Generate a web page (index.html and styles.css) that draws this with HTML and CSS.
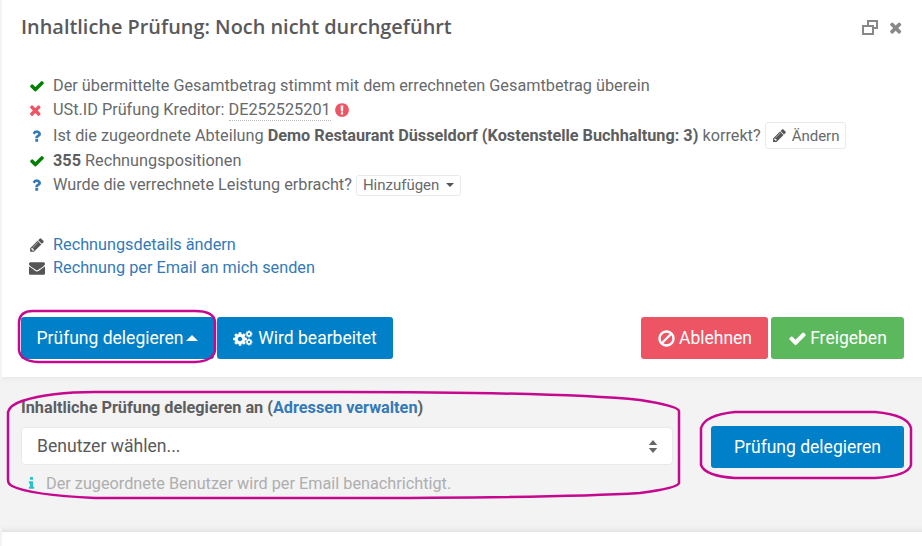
FILE: index.html
```html
<!DOCTYPE html>
<html lang="de">
<head>
<meta charset="utf-8">
<title>Inhaltliche Prüfung</title>
<link rel="stylesheet" href="styles.css">
</head>
<body>
<svg class="defs" width="0" height="0" aria-hidden="true">
  <symbol id="i-check" viewBox="0 0 1792 1792"><path d="M1671 566q0 40-28 68l-724 724-136 136q-28 28-68 28t-68-28l-136-136-362-362q-28-28-28-68t28-68l136-136q28-28 68-28t68 28l294 295 656-657q28-28 68-28t68 28l136 136q28 28 28 68z"/></symbol>
  <symbol id="i-times" viewBox="0 0 1792 1792"><path d="M1298 1322q0 40-28 68l-136 136q-28 28-68 28t-68-28l-294-294-294 294q-28 28-68 28t-68-28l-136-136q-28-28-28-68t28-68l294-294-294-294q-28-28-28-68t28-68l136-136q28-28 68-28t68 28l294 294 294-294q28-28 68-28t68 28l136 136q28 28 28 68t-28 68l-294 294 294 294q28 28 28 68z"/></symbol>
  <symbol id="i-question" viewBox="0 0 1792 1792"><path d="M1024 1376v240q0 16-12 28t-28 12h-240q-16 0-28-12t-12-28v-240q0-16 12-28t28-12h240q16 0 28 12t12 28zm316-600q0 54-15.500 101t-35 76.500-55 59.500-57.500 43.500-61 35.500q-41 23-68.500 65t-27.500 67q0 17-12 32.500t-28 15.500h-240q-15 0-25.500-18.500t-10.500-37.500v-45q0-83 65-156.500t143-108.500q59-27 84-56t25-76q0-42-46.500-74t-107.500-32q-65 0-108 29-35 25-107 115-13 16-31 16-12 0-25-8l-164-125q-13-10-15.500-25t5.500-28q160-266 464-266 80 0 161 31t146 83 106 127.500 41 158.500z"/></symbol>
  <symbol id="i-pencil" viewBox="0 0 1792 1792"><path d="M491 1536l91-91-235-235-91 91v107h128v128h107zm523-928q0-22-22-22-10 0-17 7l-542 542q-7 7-7 17 0 22 22 22 10 0 17-7l542-542q7-7 7-17zm-54-192l416 416-832 832h-416v-416zm683 96q0 53-37 90l-166 166-416-416 166-165q36-38 90-38 53 0 91 38l235 234q37 39 37 91z"/></symbol>
  <symbol id="i-envelope" viewBox="0 0 1792 1792"><path d="M1792 710v794q0 66-47 113t-113 47h-1472q-66 0-113-47t-47-113v-794q44 49 101 87 362 246 497 345 57 42 92.500 65.500t94.500 48 110 24.500h2q51 0 110-24.500t94.500-48 92.500-65.500q170-123 498-345 57-39 100-87zm0-294q0 79-49 151t-122 123q-376 261-468 325-10 7-42.500 30.500t-54 38-52 32.500-57.500 27-50 9h-2q-23 0-50-9t-57.500-27-52-32.500-54-38-42.500-30.500q-91-64-262-182.500t-205-142.500q-62-42-117-115.500t-55-136.500q0-78 41.500-130t118.500-52h1472q65 0 112.500 47t47.500 113z"/></symbol>
  <symbol id="i-ban" viewBox="0 0 1792 1792"><path d="M1440 893q0-161-87-295l-754 753q137 89 297 89 111 0 211.500-43.500t173.500-116.500 116-174.500 43-212.500zm-999 299l755-754q-135-91-300-91-148 0-273 73t-198 199-73 274q0 162 89 299zm1223-299q0 157-61 300t-163.500 246-245 164-298.500 61-298.500-61-245-164-163.500-246-61-300 61-299.500 163.500-245.500 245-164 298.500-61 298.500 61 245 164 163.500 245.500 61 299.500z"/></symbol>
  <symbol id="i-alert" viewBox="0 0 1792 1792"><path d="M896 128q209 0 385.500 103t279.500 279.500 103 385.500-103 385.500-279.500 279.500-385.500 103-385.500-103-279.500-279.500-103-385.500 103-385.500 279.500-279.500 385.500-103zm128 1247v-190q0-14-9-23.500t-22-9.500h-192q-13 0-23 10t-10 23v190q0 13 10 23t23 10h192q13 0 22-9.500t9-23.500zm-2-344l18-621q0-12-10-18-10-8-24-8h-220q-14 0-24 8-10 6-10 18l17 621q0 10 10 17.500t24 7.500h185q14 0 23.500-7.500t10.500-17.500z"/></symbol>
  <symbol id="i-info" viewBox="0 0 1792 1792"><path d="M1216 1344v128q0 26-19 45t-45 19h-512q-26 0-45-19t-19-45v-128q0-26 19-45t45-19h64v-384h-64q-26 0-45-19t-19-45v-128q0-26 19-45t45-19h384q26 0 45 19t19 45v576h64q26 0 45 19t19 45zm-128-1152v192q0 26-19 45t-45 19h-256q-26 0-45-19t-19-45v-192q0-26 19-45t45-19h256q26 0 45 19t19 45z"/></symbol>
  <symbol id="i-cog" viewBox="0 0 1792 1792"><path d="M1152 896q0-106-75-181t-181-75-181 75-75 181 75 181 181 75 181-75 75-181zm512-109v222q0 12-8 23t-20 13l-185 28q-19 54-39 91 35 50 107 138 10 12 10 25t-9 23q-27 37-99 108t-94 71q-12 0-26-9l-138-108q-44 23-91 38-16 136-29 186-7 28-36 28h-222q-14 0-24.500-8.500t-11.500-21.500l-28-184q-49-16-90-37l-141 107q-10 9-25 9-14 0-25-11-126-114-165-168-7-10-7-23 0-12 8-23 15-21 51-66.500t54-70.500q-27-50-41-99l-183-27q-13-2-21-12.500t-8-23.500v-222q0-12 8-23t19-13l186-28q14-46 39-92-40-57-107-138-10-12-10-24 0-10 9-23 26-36 98.500-107.500t94.500-71.500q13 0 26 10l138 107q44-23 91-38 16-136 29-186 7-28 36-28h222q14 0 24.500 8.500t11.500 21.500l28 184q49 16 90 37l142-107q9-9 24-9 13 0 25 10 129 119 165 170 7 8 7 22 0 12-8 23-15 21-51 66.500t-54 70.500q26 50 41 98l183 28q13 2 21 12.500t8 23.500z"/></symbol>
</svg>

<main class="page">
  <section class="panel">
    <header class="panel-head">
      <h1 class="title">Inhaltliche Prüfung: Noch nicht durchgeführt</h1>
      <div class="tools">
        <svg class="tool-restore" viewBox="0 0 16 15"><path d="M5 0h11v9h-4v6H0V5h5zm2 2v3h5v2h2V2zM2 7v6h8V7z"/></svg>
        <svg class="tool-close"><use href="#i-times"/></svg>
      </div>
    </header>

    <ul class="checks">
      <li class="row"><svg class="ico ok"><use href="#i-check"/></svg><span>Der übermittelte Gesamtbetrag stimmt mit dem errechneten Gesamtbetrag überein</span></li>
      <li class="row"><svg class="ico bad"><use href="#i-times"/></svg><span>USt.ID Prüfung Kreditor: <span class="dotted">DE252525201</span></span><svg class="alert"><use href="#i-alert"/></svg></li>
      <li class="row row-tall"><svg class="ico ask"><use href="#i-question"/></svg><span>Ist die zugeordnete Abteilung <b>Demo Restaurant Düsseldorf (Kostenstelle Buchhaltung: 3)</b> korrekt?</span><span class="mini mini-edit"><svg class="mini-ico"><use href="#i-pencil"/></svg>Ändern</span></li>
      <li class="row"><svg class="ico ok"><use href="#i-check"/></svg><span><b>355</b> Rechnungspositionen</span></li>
      <li class="row"><svg class="ico ask"><use href="#i-question"/></svg><span>Wurde die verrechnete Leistung erbracht?</span><span class="mini mini-add">Hinzufügen<i class="caret-down"></i></span></li>
    </ul>

    <ul class="links">
      <li class="row link-row"><svg class="ico dark"><use href="#i-pencil"/></svg><a href="#">Rechnungsdetails ändern</a></li>
      <li class="row link-row"><svg class="ico dark"><use href="#i-envelope"/></svg><a href="#">Rechnung per Email an mich senden</a></li>
    </ul>

    <div class="actions">
      <div class="btn-group">
        <button class="btn blue btn-delegate">Prüfung delegieren<i class="caret-up"></i></button>
        <button class="btn blue btn-work">
          <svg class="cogs" viewBox="0 0 20 16"><use href="#i-cog" x="-1" y="1" width="16" height="16"/><use href="#i-cog" x="12" y="0" width="8" height="8"/><use href="#i-cog" x="12" y="8" width="8" height="8"/></svg>Wird bearbeitet</button>
      </div>
      <div class="btn-group">
        <button class="btn red"><svg class="btn-ico"><use href="#i-ban"/></svg>Ablehnen</button>
        <button class="btn green"><svg class="btn-ico"><use href="#i-check"/></svg>Freigeben</button>
      </div>
    </div>
  </section>

  <section class="delegate">
    <div class="delegate-form">
      <div class="field-label">Inhaltliche Prüfung delegieren an (<a href="#">Adressen verwalten</a>)</div>
      <div class="select">
        <span>Benutzer wählen...</span>
        <svg class="sort" viewBox="0 0 10 16"><path d="M5 1l4.500 5.500H.5z"/><path d="M5 15L.5 9.500h9z"/></svg>
      </div>
      <div class="hint"><svg class="hint-ico"><use href="#i-info"/></svg>Der zugeordnete Benutzer wird per Email benachrichtigt.</div>
    </div>
    <button class="btn blue btn-submit">Prüfung delegieren</button>
  </section>
</main>

<svg class="marks" viewBox="0 0 922 546" aria-hidden="true">
  <path d="M33 311H195Q214 311 215 322V350Q214 361 195 362H38Q20 361 19 350V322Q20 311 33 311Z"/>
  <path d="M95 392H340Q560 392 640 400Q678 406 679 411V483Q678 488 640 493Q560 498 340 498H95Q30 495 12 486Q8 484 8 480V412Q10 405 22 401Q50 392 95 392Z"/>
  <path d="M735 412H875Q908 415 911 428V465Q908 476 875 478H735Q705 476 701 465V428Q705 415 735 412Z"/>
</svg>
</body>
</html>
```

FILE: styles.css
```css
* { box-sizing: border-box; }

html, body {
  margin: 0;
  padding: 0;
  height: 100%;
  overflow: hidden;
  background: #fff;
}

body {
  position: relative;
  font-family: Roboto, "Liberation Sans", sans-serif;
  font-size: 16.250px;
  color: #676a6c;
}

.defs { display: block; height: 0; }

.page {
  margin-left: 2px;
  height: 546px;
  box-shadow: -2px 0 0 #f3f3f4;
}

ul { list-style: none; margin: 0; padding: 0; }
a { color: #337ab7; text-decoration: none; }
b { font-weight: 700; color: #5c5e60; }
svg { fill: currentColor; flex: none; }

/* top panel */
.panel {
  height: 377px;
  padding: 0 18px 0 19px;
  display: flex;
  flex-direction: column;
}

.panel-head {
  height: 74px;
  padding-top: 13px;
  display: flex;
  justify-content: space-between;
  align-items: flex-start;
}

.title {
  margin: 0;
  font-family: "Open Sans", Lato, sans-serif;
  font-size: 19.900px;
  line-height: 28px;
  font-weight: 600;
  color: #59595b;
}

.tools {
  display: flex;
  align-items: center;
  gap: 11px;
  height: 28px;
  color: #888;
  margin-right: -2px;
}
.tool-restore { width: 16px; height: 15px; }
.tool-close { width: 17px; height: 17px; }

.row {
  display: flex;
  align-items: center;
  height: 24px;
  line-height: 24px;
  white-space: nowrap;
}
.row-tall { height: 27px; }

.checks { padding-left: 8px; }

.ico {
  width: 16px;
  height: 16px;
  margin-right: 8px;
}
.ok { color: #008000; }
.bad { color: #ed5565; }
.ask { color: #337ab7; margin-bottom: 2px; }
.dark { color: #555; }

.dotted { border-bottom: 1px dotted #bbb; padding-bottom: 1px; }

.alert {
  width: 16px;
  height: 16px;
  margin-left: 3px;
  color: #ed5565;
}

.mini {
  display: inline-flex;
  align-items: center;
  margin-left: 4px;
  padding: 0 6px;
  background: #fff;
  border: 1px solid #e7eaec;
  border-radius: 3px;
  color: #676a6c;
  font-size: 15px;
}
.mini-edit { height: 27px; }
.mini-add { height: 21px; line-height: 19px; }
.mini-ico { width: 15px; height: 15px; margin-right: 5px; color: #555; }

.caret-down, .caret-up {
  display: inline-block;
  width: 0;
  height: 0;
  border-left: 4px solid transparent;
  border-right: 4px solid transparent;
}
.caret-down { border-top: 4px solid #555; margin-left: 7px; }
.caret-up { border-bottom: 6px solid #fff; border-left-width: 6px; border-right-width: 6px; margin-left: 3px; }

.links { margin-top: 36px; padding-left: 8px; }
.link-row { height: 23.500px; }

.actions {
  margin-top: 37px;
  display: flex;
  justify-content: space-between;
}
.btn-group { display: flex; gap: 3px; }

.btn {
  height: 42px;
  border: 0;
  border-radius: 3px;
  padding: 0 10px;
  display: inline-flex;
  align-items: center;
  justify-content: center;
  white-space: nowrap;
  font-family: Roboto, "Liberation Sans", sans-serif;
  font-size: 17.500px;
  color: #fff;
}
.blue { background: #0080c8; }
.red { background: #ed5565; }
.green { background: #5cb85c; }
.btn-delegate { width: 193px; }
.btn-work { width: 176px; }
.cogs { width: 20px; height: 16px; margin-right: 5px; }
.btn-ico { width: 19px; height: 19px; margin-right: 3px; }
.red { width: 127px; }
.green { width: 133px; }

/* delegate panel */
.delegate {
  height: 155px;
  background: #f3f3f4;
  box-shadow: inset 0 -8px 6px -7px #d9d9d9, inset 0 7px 6px -7px #e2e2e2;
  padding: 21px 18px 0 19px;
  display: flex;
  align-items: flex-start;
  justify-content: space-between;
}

.delegate-form { width: 652px; }

.field-label {
  height: 29px;
  line-height: 20px;
  font-weight: 700;
  color: #5c5e60;
}
.field-label a { font-weight: 700; }

.select {
  height: 38px;
  background: #fff;
  border: 1px solid #e7eaec;
  border-radius: 4px;
  padding: 0 14px 0 15px;
  display: flex;
  align-items: center;
  justify-content: space-between;
  font-size: 17.600px;
  color: #59595b;
}
.sort { width: 10px; height: 15px; color: #666; }

.hint {
  display: flex;
  align-items: center;
  height: 36px;
  padding-left: 3px;
  color: #aeaeae;
}
.hint-ico { width: 15px; height: 15px; margin-right: 7px; color: #23c6c8; }

.btn-submit { width: 193px; margin-top: 28px; }

/* hand-drawn annotations lying over the page */
.marks {
  position: absolute;
  left: 0;
  top: 0;
  width: 922px;
  height: 546px;
  fill: none;
  stroke: #c6088f;
  stroke-width: 2.500;
  pointer-events: none;
}
```
